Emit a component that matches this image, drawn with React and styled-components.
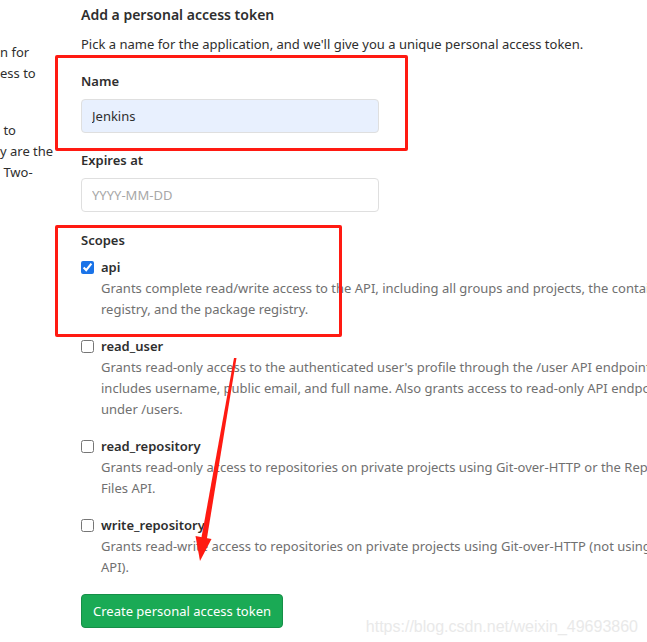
import React from "react";
import styled, { createGlobalStyle } from "styled-components";

// 스크린샷 재현: personal access token 생성 폼 + 빨간 주석(박스, 화살표)
const GlobalStyle = createGlobalStyle`
  html, body {
    margin: 0;
    padding: 0;
    background: #ffffff;
  }
  body {
    font-family: "Noto Sans", "Segoe UI", sans-serif;
    font-size: 13px;
    color: #2e2e2e;
    overflow: hidden;
  }
`;

const sideParagraphs = [
  ["n for", "ess to", ""],
  [" to", "y are the", " Two-"],
];

const scopes = [
  {
    name: "api",
    checked: true,
    lines: [
      "Grants complete read/write access to the API, including all groups and projects, the container",
      "registry, and the package registry.",
    ],
  },
  {
    name: "read_user",
    lines: [
      "Grants read-only access to the authenticated user's profile through the /user API endpoint, which",
      "includes username, public email, and full name. Also grants access to read-only API endpoints",
      "under /users.",
    ],
  },
  {
    name: "read_repository",
    lines: [
      "Grants read-only access to repositories on private projects using Git-over-HTTP or the Repository",
      "Files API.",
    ],
  },
  {
    name: "write_repository",
    lines: [
      "Grants read-write access to repositories on private projects using Git-over-HTTP (not using the",
      "API).",
    ],
  },
];

const App = () => {
  return (
    <>
      <GlobalStyle />
      <Page>
        <Sidebar>
          {sideParagraphs.map((lines, idx) => (
            <SideParagraph key={idx} first={idx === 0}>
              {lines.map((line, i) => (
                <SideLine key={i}>{line}</SideLine>
              ))}
            </SideParagraph>
          ))}
        </Sidebar>

        <Main>
          <Title>Add a personal access token</Title>
          <Intro>
            Pick a name for the application, and we'll give you a unique
            personal access token.
          </Intro>

          <FormGroup space={16}>
            <Highlight top={-16} width={353} height={96} />
            <Label>Name</Label>
            <Input defaultValue="Jenkins" autofilled />
          </FormGroup>

          <FormGroup space={17}>
            <Label>Expires at</Label>
            <Input placeholder="YYYY-MM-DD" />
          </FormGroup>

          <FormGroup space={18}>
            <Highlight top={-5} width={287} height={112} />
            <Label>Scopes</Label>
            {scopes.map((scope, idx) => (
              <Scope key={scope.name} first={idx === 0}>
                <ScopeRow>
                  <Checkbox type="checkbox" defaultChecked={scope.checked} />
                  <ScopeName>{scope.name}</ScopeName>
                </ScopeRow>
                <ScopeDesc>
                  {scope.lines.map((line, i) => (
                    <DescLine key={i}>{line}</DescLine>
                  ))}
                </ScopeDesc>
              </Scope>
            ))}
          </FormGroup>

          <SubmitButton type="button">Create personal access token</SubmitButton>
        </Main>

        <Arrow viewBox="0 0 55 215" width="55" height="215">
          <polygon points="44,8 46.5,8 16.5,191 11,190" fill="#ff1a12" />
          <polygon points="5.5,186 21.5,189 10,211" fill="#ff1a12" />
        </Arrow>

        <Watermark>https://blog.csdn.net/weixin_49693860</Watermark>
      </Page>
    </>
  );
};

const Page = styled.div`
  position: relative;
  display: flex;
  width: 647px;
  height: 642px;
  overflow: hidden;
`;

const Sidebar = styled.div`
  flex: 0 0 55px;
  padding-top: 42px;
  overflow: hidden;
  line-height: 21px;
  font-size: 13px;
  color: #2e2e2e;
`;

const SideParagraph = styled.div`
  margin-top: ${(props) => (props.first ? "0" : "15px")};
`;

const SideLine = styled.div`
  height: 21px;
  white-space: pre;
`;

const Main = styled.div`
  flex: 0 0 720px;
  padding: 5px 0 0 26px;
  box-sizing: border-box;
`;

const Title = styled.h4`
  margin: 0;
  font-size: 14px;
  font-weight: 600;
  line-height: 20px;
  color: #2e2e2e;
`;

const Intro = styled.p`
  margin: 9px 0 0;
  line-height: 21px;
  white-space: nowrap;
`;

const FormGroup = styled.div`
  position: relative;
  margin-top: ${(props) => props.space}px;
`;

const Highlight = styled.div`
  position: absolute;
  left: -26px;
  top: ${(props) => props.top}px;
  width: ${(props) => props.width}px;
  height: ${(props) => props.height}px;
  border: 3px solid #ff1a12;
  border-radius: 2px;
  box-sizing: border-box;
  pointer-events: none;
  z-index: 2;
`;

const Label = styled.label`
  display: block;
  margin-bottom: 8px;
  font-weight: 600;
  line-height: 20px;
  color: #2e2e2e;
`;

const Input = styled.input`
  display: block;
  width: 298px;
  height: 34px;
  box-sizing: border-box;
  padding: 0 10px;
  border: 1px solid #dfdfdf;
  border-radius: 4px;
  background: ${(props) => (props.autofilled ? "#e8f0fe" : "#ffffff")};
  font-family: inherit;
  font-size: 13px;
  color: #2e2e2e;
  outline: none;
  &::placeholder {
    color: #a7a7a7;
  }
`;

const Scope = styled.div`
  margin-top: ${(props) => (props.first ? "-1px" : "16px")};
`;

const ScopeRow = styled.div`
  display: flex;
  align-items: center;
  height: 21px;
`;

const Checkbox = styled.input`
  width: 13px;
  height: 13px;
  margin: 0 7px 0 0;
  accent-color: #1a73e8;
`;

const ScopeName = styled.span`
  font-weight: 600;
  line-height: 21px;
  color: #2e2e2e;
`;

const ScopeDesc = styled.div`
  padding-left: 20px;
  color: #707070;
  line-height: 21px;
`;

const DescLine = styled.div`
  white-space: nowrap;
`;

const SubmitButton = styled.button`
  display: flex;
  align-items: center;
  justify-content: center;
  margin-top: 16px;
  width: 202px;
  height: 34px;
  padding: 0 6px;
  border: 1px solid #168f48;
  border-radius: 4px;
  background-color: #1aaa55;
  color: #ffffff;
  font-family: inherit;
  font-size: 13px;
  white-space: nowrap;
  cursor: pointer;
`;

const Arrow = styled.svg`
  position: absolute;
  left: 190px;
  top: 350px;
  pointer-events: none;
  z-index: 3;
`;

const Watermark = styled.div`
  position: absolute;
  right: 9px;
  bottom: 6px;
  font-family: "Liberation Sans", Arial, sans-serif;
  font-size: 16px;
  color: #e9e9e9;
  white-space: nowrap;
  pointer-events: none;
`;

export default App;
